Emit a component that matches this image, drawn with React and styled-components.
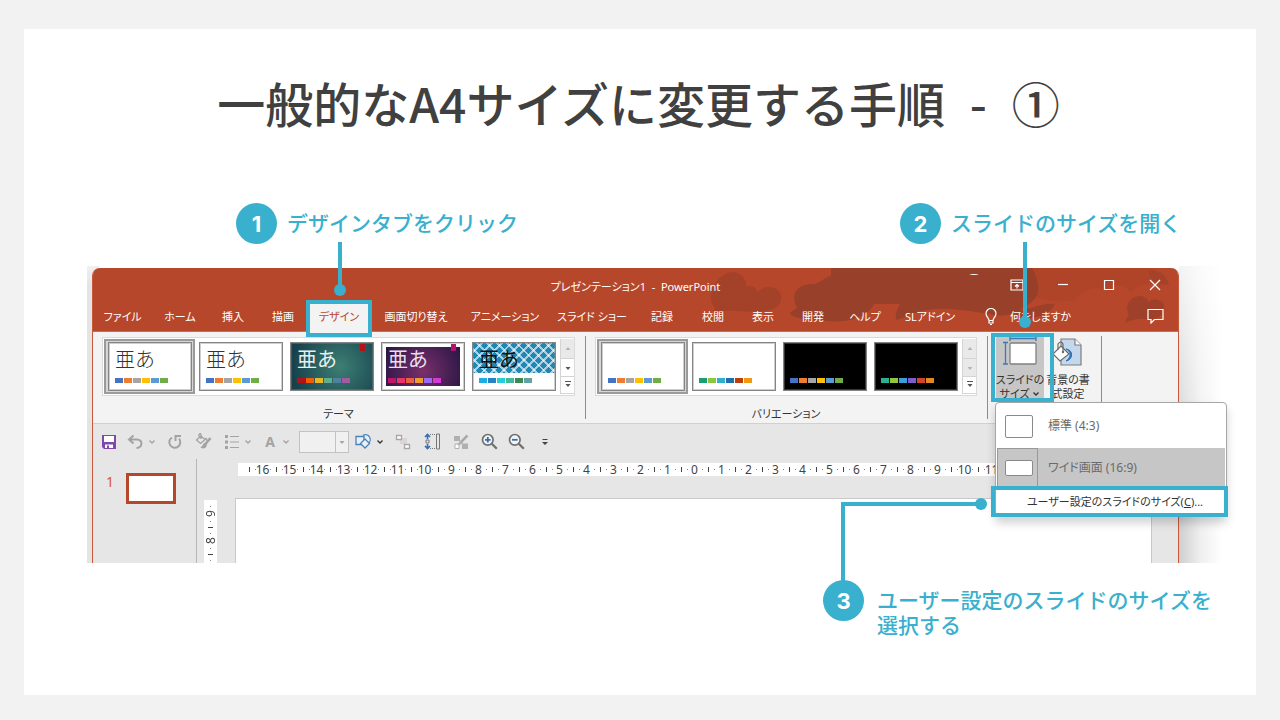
import React from "react";
import styled, { createGlobalStyle, css } from "styled-components";

const ACCENT = "#39b0cd";
const BRAND = "#b7472a";

const GlobalStyle = createGlobalStyle`
  *, *::before, *::after { box-sizing: border-box; }
  body { margin: 0; background: #f2f2f2; font-family: "Noto Sans", "Noto Sans CJK JP", sans-serif; }
  button, input { font: inherit; color: inherit; margin: 0; }
  button { border: 0; padding: 0; background: none; cursor: pointer; }
  svg { display: block; }
`;

/* ---------- slide ---------- */

const Page = styled.main`
  min-height: 100vh;
  padding: 29px 24px 25px;
  display: flex;
  flex-direction: column;
`;

const Slide = styled.article`
  flex: 1;
  background: #fff;
  padding: 43px 77px 52px 68px;
`;

const Title = styled.h1`
  margin: 0 0 71px;
  text-align: center;
  white-space: nowrap;
  font: 500 48px/60px "Noto Sans CJK JP", sans-serif;
  color: #404040;
  padding-left: 6px;
`;

const Dash = styled.span`
  margin: 0 14px;
`;

const StepRow = styled.div`
  display: grid;
  grid-template-columns: 664px auto;
  padding-left: 144px;
  margin-bottom: 24px;
`;

const LastStep = styled.div`
  padding: 17px 0 0 731px;
`;

const Step = styled.section`
  position: relative;
  display: flex;
  gap: ${(p) => (p.$wide ? 13 : 10)}px;
`;

const StepNumber = styled.span`
  flex: none;
  width: 41px;
  height: 41px;
  border-radius: 50%;
  background: ${ACCENT};
  color: #fff;
  font: 700 22px/42px Inter, sans-serif;
  text-align: center;
`;

const StepText = styled.p`
  margin: 7px 0 0;
  font: 500 21px/25px "Noto Sans CJK JP", sans-serif;
  color: ${ACCENT};
  white-space: nowrap;
`;

const Highlight = styled.span`
  position: absolute;
  inset: ${(p) => p.$inset};
  border: 4px solid ${ACCENT};
  z-index: 5;
  pointer-events: none;
`;

const Pin = styled.span`
  position: absolute;
  left: 28px;
  bottom: ${(p) => p.$bottom}px;
  width: 4px;
  height: ${(p) => p.$length}px;
  background: ${ACCENT};
  &::after {
    content: "";
    position: absolute;
    left: -4px;
    bottom: -6px;
    width: 12px;
    height: 12px;
    border-radius: 50%;
    background: ${ACCENT};
  }
`;

const Elbow = styled.span`
  position: absolute;
  left: 18px;
  bottom: 100%;
  width: 140px;
  height: 79px;
  margin-bottom: -1px;
  border: solid ${ACCENT};
  border-width: 4px 0 0 4px;
  z-index: 6;
  &::after {
    content: "";
    position: absolute;
    right: -6px;
    top: -8px;
    width: 12px;
    height: 12px;
    border-radius: 50%;
    background: ${ACCENT};
  }
`;

/* ---------- application window ---------- */

const Window = styled.section`
  position: relative;
  border-left: 1px solid #c8583c;
  border-right: 1px solid #c8583c;
  border-top-left-radius: 8px;
  border-top-right-radius: 8px;
  background: #e6e6e6;
  font-size: 11px;
  line-height: 16px;
  color: #333;
  &::before {
    content: "";
    position: absolute;
    inset: -2px auto 0 -6px;
    width: 12px;
    z-index: -1;
    background: linear-gradient(#f0f0f0, #e4e4e4 20px);
  }
  &::after {
    content: "";
    position: absolute;
    inset: -2px -44px 0 auto;
    width: 43px;
    background: linear-gradient(to right, #cfcfcf, #efefef 50%, #fff);
    mask-image: linear-gradient(rgba(0, 0, 0, 0.25), #000 75%);
  }
`;

const Stack = styled.div`
  position: relative;
  z-index: 0;
`;

const Header = styled.header`
  position: relative;
  background: ${BRAND};
  color: #fff;
  border-radius: 7px 7px 0 0;
  border-bottom: 1px solid #cf6a4e;
  height: 64px;
`;

const ArtClip = styled.div`
  position: absolute;
  inset: 0;
  overflow: hidden;
  border-radius: 7px 7px 0 0;
  display: flex;
  justify-content: flex-end;
`;

const TitleBar = styled.div`
  position: relative;
  display: grid;
  grid-template-columns: 1fr auto 1fr;
  align-items: center;
  height: 33px;
`;

const DocTitle = styled.span`
  grid-column: 2;
  padding-top: 5px;
  font-feature-settings: "palt";
  white-space: pre;
`;

const WindowControls = styled.div`
  display: flex;
  justify-content: flex-end;
`;

const WindowButton = styled.button`
  width: 46px;
  height: 31px;
  display: grid;
  place-items: center;
`;

const TabBar = styled.nav`
  position: relative;
  display: flex;
  height: 31px;
`;

const Tab = styled.button`
  position: relative;
  width: ${(p) => p.$w}px;
  height: 31px;
  white-space: nowrap;
  font-feature-settings: "palt";
  ${(p) =>
    p.$active &&
    css`
      background: #f3f3f3;
      color: ${BRAND};
    `}
`;

const TellMe = styled.button`
  display: flex;
  align-items: center;
  gap: 13px;
  margin-left: 17px;
  white-space: nowrap;
  font-feature-settings: "palt";
`;

const CommentButton = styled.button`
  margin-left: auto;
  padding: 0 14px 2px;
`;

/* ---------- ribbon ---------- */

const Ribbon = styled.div`
  display: flex;
  align-items: flex-start;
  height: 91px;
  padding: 4px 9px 0;
  background: #f3f3f3;
`;

const Group = styled.div`
  display: flex;
  flex-direction: column;
  align-items: center;
  gap: 10px;
  padding-top: 1px;
`;

const GroupLabel = styled.span`
  line-height: 16px;
  font-feature-settings: "palt";
`;

const Divider = styled.span`
  width: 1px;
  height: 83px;
  background: #8c8c8c;
  margin: ${(p) => p.$margin};
`;

const Gallery = styled.div`
  display: flex;
  padding: 1px;
  background: #fff;
  border: 1px solid #dadada;
`;

const GalleryItem = styled.button`
  width: 91px;
  height: 55px;
  padding: 1px 1px 1px 2px;
  border: 2px solid ${(p) => (p.$selected ? "#9a9a9a" : "transparent")};
  background: ${(p) => (p.$selected ? "#d6d6d2" : "transparent")};
`;

const Thumb = styled.span`
  position: relative;
  display: flex;
  flex-direction: column;
  justify-content: space-between;
  width: 84px;
  height: 49px;
  border: 1px solid #848484;
  outline: 1px solid #84848466;
  outline-offset: -2px;
  padding: 2px 0 7px 6px;
  background: ${(p) => p.$bg};
  ${(p) =>
    p.$frame &&
    css`
      box-shadow: inset 0 0 0 ${p.$frame}px #fff;
    `}
`;

const Ribbonlet = styled.span`
  position: absolute;
  right: 8px;
  top: 1px;
  width: 5px;
  height: 7px;
  background: ${(p) => p.$color};
`;

const Sample = styled.span`
  height: 26px;
  font: ${(p) => p.$weight} 20px/28px "Noto Sans CJK JP", sans-serif;
  text-align: left;
  color: ${(p) => p.$color};
`;

const Swatches = styled.span`
  display: flex;
  gap: 1px;
  margin-top: auto;
`;

const Swatch = styled.i`
  width: 8px;
  height: 5px;
  background: ${(p) => p.$color};
`;

const Scroller = styled.div`
  display: grid;
  grid-template-rows: 20px 18px 17px;
  width: 14px;
  margin: 0 -1px 0 1px;
  border-left: 1px solid #d4d4d4;
`;

const ScrollButton = styled.button`
  display: grid;
  place-items: center;
  border-bottom: 1px solid #d4d4d4;
  color: ${(p) => (p.$off ? "#b4b4b4" : "#555")};
  background: ${(p) => (p.$off ? "#e9e9e9" : "#fff")};
`;

const SizeWrap = styled.div`
  position: relative;
  z-index: 3;
`;

const BigButton = styled.button`
  display: flex;
  flex-direction: column;
  align-items: center;
  width: 48px;
  height: 66px;
  line-height: 14px;
  white-space: nowrap;
  font-feature-settings: "palt";
  background: ${(p) => (p.$pressed ? "#c6c6c6" : "transparent")};
  svg { margin-bottom: 3px; }
`;

const Inline = styled.span`
  display: flex;
  align-items: center;
  gap: 3px;
  svg { margin: 0; }
`;

const Menu = styled.div`
  position: absolute;
  left: -1px;
  top: 66px;
  width: 232px;
  padding: 1px;
  background: #fff;
  border: 1px solid #a6a6a6;
  border-radius: 4px;
  box-shadow: 0 6px 10px rgba(0, 0, 0, 0.18);
`;

const MenuItem = styled.button`
  display: grid;
  grid-template-columns: 41px 1fr;
  align-items: center;
  gap: 10px;
  width: 100%;
  height: ${(p) => (p.$selected ? 40 : 44)}px;
  text-align: left;
  font-size: 12px;
  color: #6a6a6a;
  background: ${(p) => (p.$selected ? "#c6c6c6" : "#fff")};
  font-feature-settings: "palt";
`;

const RatioCell = styled.span`
  display: grid;
  place-items: center;
  align-self: stretch;
  padding-left: 3px;
  border: solid #999;
  border-width: ${(p) => (p.$selected ? "1px" : 0)};
`;

const Ratio = styled.span`
  width: 28px;
  height: ${(p) => p.$h}px;
  border: 1px solid #8a8a8a;
  border-radius: 2px;
  background: #fff;
`;

const CustomSize = styled.button`
  position: relative;
  display: block;
  width: 100%;
  height: 26px;
  margin-top: 1px;
  padding-left: 8px;
  white-space: nowrap;
  font-feature-settings: "palt";
`;

/* ---------- quick access toolbar ---------- */

const QuickBar = styled.div`
  display: flex;
  align-items: center;
  height: 36px;
  padding-left: 4px;
  border-top: 1px solid #d0d0d0;
  color: #a3a3a3;
`;

const Tool = styled.button`
  display: flex;
  align-items: center;
  justify-content: ${(p) => (p.$menu ? "flex-start" : "center")};
  gap: 4px;
  width: ${(p) => p.$w}px;
  height: 24px;
  padding-left: ${(p) => (p.$menu ? 6 : 0)}px;
`;

const FontSize = styled.label`
  display: flex;
  width: 50px;
  height: 22px;
  margin: 0 0 0 5px;
  border: 1px solid #c2c2c2;
  background: #f0f0f0;
  input {
    width: 36px;
    border: 0;
    border-right: 1px solid #c2c2c2;
    padding: 0 2px;
    background: none;
    outline: 0;
  }
  svg { margin: auto; }
`;

/* ---------- workspace ---------- */

const Workspace = styled.div`
  display: grid;
  grid-template-columns: 104px 1fr;
  height: 104px;
  font-size: 12px;
`;

const Outline = styled.aside`
  display: flex;
  gap: 12px;
  padding: 14px 0 0 13px;
  border-right: 1px solid #b5b5b5;
  font-size: 14px;
  line-height: 18px;
  color: #d4553a;
`;

const PageThumb = styled.span`
  width: 50px;
  height: 31px;
  background: #fff;
  border: 3px solid ${BRAND};
`;

const Editor = styled.div`
  display: grid;
  grid-template: 39px 1fr / 38px 1fr 26px;
`;

const Ruler = styled.div`
  grid-column: 2;
  display: flex;
  height: 13px;
  margin: 4px 0 0 3px;
  padding-left: 11px;
  background: #fff;
  line-height: 13px;
  color: #444;
`;

const SideRuler = styled.div`
  grid-column: 1;
  grid-row: 2;
  display: flex;
  width: 13px;
  margin: 2px 0 0 7px;
  background: #fff;
  writing-mode: vertical-rl;
  line-height: 13px;
  color: #444;
`;

const Unit = styled.span`
  position: relative;
  flex: none;
  display: flex;
  align-items: center;
  justify-content: center;
  inline-size: ${(p) => (p.$short ? 8 : 27)}px;
  block-size: 13px;
  b { font-weight: 400; ${(p) => p.$side && "transform: rotate(180deg);"} }
  &::before, &::after {
    content: "";
    position: absolute;
    inset-inline-start: 0;
    inset-block-start: 4px;
    inline-size: 1px;
    block-size: 5px;
    background: #444;
  }
  &::after {
    inset-inline-start: 6px;
    inset-block-start: 6px;
    block-size: 1px;
    background: #888;
    box-shadow: ${(p) => (p.$short ? "none" : p.$side ? "0 15px #888" : "15px 0 #888")};
  }
  ${(p) => p.$side && "&:first-child::before { display: none; }"}
`;

const Canvas = styled.div`
  grid-column: 2;
  background: #fff;
  border: solid #c9c9c9;
  border-width: 1px 1px 0;
`;

/* ---------- drawings ---------- */

const Chevron = ({ color = "currentColor" }) => (
  <svg width="8" height="6" viewBox="0 0 8 6" fill="none" stroke={color} strokeWidth="1.3">
    <path d="M1.500 1.500 4 4l2.500-2.500" />
  </svg>
);

const Arrow = ({ up, bar }) => (
  <svg width="8" height="8" viewBox="0 0 8 8" fill="currentColor">
    {bar && <path d="M1 0h6v1H1z" />}
    <path d={up ? "M4 2 1.500 5h5z" : "M1.500 3h5L4 6z"} />
  </svg>
);

const HeaderArt = () => (
  <svg width="480" height="64" viewBox="0 0 480 64" aria-hidden="true">
    <g fill="#98402a">
      <path opacity=".6" d="M17 40C6 28 18 6 34 4c10 0 15 8 14 15 6-3 10 1 12 5 5-7 20-7 23 3 2 10-6 14-11 15-18 5-40-3-57 3 0-3 2-3 2-5z" />
      <path d="M99 40c-8-16 2-25 18-24 6-2 10-7 16-8V0h201c8 14 11 30-7 38-12 10-20 11-36 8-30-5-50-8-72-2-6 2-13 6-21 8-1-7 1-10 4-16h-26c-8 16-34 20-54 16-14-1-28-1-30-7l7-5z" />
      <path opacity=".85" d="M312 42c18 2 30-8 45-6-4 10-20 16-36 14z" />
      <path opacity=".8" d="M428 51c4-3 2-6 1-10 0-13 16-18 22-7 5-5 15-2 15 5 2 12-14 13-20 12-7-1-14 2-19 4z" />
    </g>
    <g fill="#98402a" opacity=".55">
      <path d="M330 0h120c8 0 14 6 20 16l-10 3c-9-8-20 1-28 5-8-10-16-8-19 0-12-7-28-4-36 8-18 3-35 0-47-6z" opacity=".45" />
      <path d="M450 3c8-3 19 3 21 14-8-2-14 0-18-6z" />
    </g>
    <path d="M271 7q5-2 10 0z" fill="#fff" />
  </svg>
);

const stroke = { fill: "none", stroke: "currentColor", strokeWidth: 1.2 };

const controls = [
  ["リボンの表示オプション", <svg key="r" width="14" height="12" viewBox="0 0 14 12" {...stroke}><path d="M1 1h12v10H1zM1 3.500h12M7 9.500V5.500M5 7.500l2-2 2 2" /></svg>],
  ["最小化", <svg key="m" width="12" height="12" viewBox="0 0 12 12" {...stroke}><path d="M1 5.500h10" /></svg>],
  ["最大化", <svg key="x" width="12" height="12" viewBox="0 0 12 12" {...stroke}><path d="M1.500 1.500h9v9h-9z" /></svg>],
  ["閉じる", <svg key="c" width="12" height="12" viewBox="0 0 12 12" {...stroke}><path d="m1 1 10 10M11 1 1 11" /></svg>],
];

const SaveIcon = () => (
  <svg width="16" height="16" viewBox="0 0 16 16">
    <path d="M1 1h14v14H3l-2-2z" fill="#8048a8" />
    <path d="M3 2h10v6H3zM4 10.500h8V14H4z" fill="#fff" />
    <path d="M6 11.500h2V14H6z" fill="#8048a8" />
  </svg>
);

const UndoIcon = () => (
  <svg width="17" height="16" viewBox="0 0 17 16" fill="none" stroke="currentColor" strokeWidth="2">
    <path d="M6.500 1.500 2 5.500l4.500 4M2.500 5.500H10c6 0 6 8-.5 8.500" />
  </svg>
);

const RedoIcon = () => (
  <svg width="16" height="16" viewBox="0 0 16 16" fill="none" stroke="currentColor" strokeWidth="2">
    <path d="M5 3.500a5.500 5.500 0 1 0 7 1.200M8.500 7V2H14" />
  </svg>
);

const PainterIcon = () => (
  <svg width="17" height="17" viewBox="0 0 17 17" fill="none" stroke="currentColor" strokeWidth="1.3">
    <path d="m1.500 7 4.500-4 4 3.500-4.500 4zM4 5V1.500q1.500-1.500 2 0V6" />
    <path d="m15.500 5-5 6" strokeWidth="2.500" />
    <path d="M10.500 9.500c-3 0-2 4-5 4.500 1 2.500 6.500 2 6.500-3z" fill="currentColor" stroke="none" />
    <path d="M10 5.500q2.500 0 2 3.500" />
  </svg>
);

const BulletsIcon = () => (
  <svg width="16" height="16" viewBox="0 0 16 16" fill="currentColor">
    <path d="M1 1h3v3H1zM1 6.500h3v3H1zM1 12h3v3H1zM6 2h9v1H6zM6 7.500h9v1H6zM6 13h9v1H6z" />
  </svg>
);

const FontLetter = styled.span`
  width: 16px;
  font-weight: 700;
  font-size: 14px;
  line-height: 24px;
  text-align: center;
`;

const ShapesIcon = () => (
  <svg width="17" height="17" viewBox="0 0 17 17" fill="#e9f1f8" stroke="#4a82b8" strokeWidth="1.300">
    <path d="M8 2.500a4.500 4.500 0 1 1 5 8" />
    <path d="M1 3.500h8v8H1z" />
    <path d="m10 6 4.500 4.500L10 15l-4.500-4.500z" />
  </svg>
);

const AlignIcon = () => (
  <svg width="16" height="16" viewBox="0 0 16 16">
    <path d="M7 4h5v5h-1v1H5V6h2z" fill="#d8d4d8" />
    <path d="M1.500 1.500h5v4h-5zM9.500 10.500h5v4h-5z" fill="#fff" stroke="#aaa5aa" strokeWidth="1.300" />
  </svg>
);

const SpacingIcon = () => (
  <svg width="17" height="17" viewBox="0 0 17 17" fill="none">
    <path d="M3.500 6V1.500M1 4l2.500-2.500L6 4M3.500 11v4.500M1 13l2.500 2.500L6 13" stroke="#2f6fb5" strokeWidth="1.600" />
    <path d="M2 7h3v3H2zM12.500 1h3v15h-3z" stroke="#777" />
    <path d="M6 1.500h6M6 15.500h6" stroke="#777" strokeDasharray="1 1" />
  </svg>
);

const SelectIcon = () => (
  <svg width="16" height="16" viewBox="0 0 16 16" fill="#b0b0b0">
    <path d="M1 2h6v5H1zM9 9.500h6V15H9z" />
    <path d="M2 10h4v4.500H2z" fill="#fff" stroke="#b0b0b0" />
    <path d="M14.500 1.500 7 9" stroke="#aaa" strokeWidth="2.500" />
    <path d="M8 6.500c-2 1-2 3-4 4 2 1 5 0 6-2z" />
  </svg>
);

const ZoomIcon = ({ plus }) => (
  <svg width="17" height="17" viewBox="0 0 17 17" fill="none">
    <circle cx="6.800" cy="6.800" r="5.300" fill="#f4f4f4" stroke="#707070" strokeWidth="1.700" />
    <path d="m10.800 10.800 5 5" stroke="#707070" strokeWidth="2.300" />
    <path d={plus ? "M4 6.800h5.600M6.800 4v5.600" : "M4 6.800h5.600"} stroke="#2f6fb5" strokeWidth="1.800" />
  </svg>
);

const SlideSizeIcon = () => (
  <svg width="36" height="34" viewBox="0 0 36 34" fill="none">
    <path d="M8 2.500h26M8 0v5M34 0v5M3.500 6v22M1 6.500h5M1 28h5" stroke="#3f78b5" strokeWidth="1.300" />
    <rect x="8" y="7" width="26" height="21" rx="1" fill="#fff" stroke="#808080" strokeWidth="1.300" />
  </svg>
);

const BackgroundIcon = () => (
  <svg width="32" height="34" viewBox="0 0 32 34" fill="none">
    <path d="M9 3h14l6 6v20H9z" fill="#c3d7ed" stroke="#7f7f7f" strokeWidth="1.200" />
    <path d="M23 3v6h6" fill="#fff" stroke="#7f7f7f" strokeWidth="1.200" />
    <path d="M14 13c5 2 6 8 0 12 7-1 8-11 0-12z" fill="#2e74b8" stroke="#2e74b8" />
    <path d="m9 10 8 8-9 7-7-7z" fill="#fff" stroke="#6a6a6a" strokeWidth="1.200" />
    <path d="M6 14V8q3-4 5 0v8" stroke="#6a6a6a" strokeWidth="1.200" />
    <circle cx="11" cy="16" r="1.200" fill="#6a6a6a" />
  </svg>
);

/* ---------- data ---------- */

const tabs = [
  ["ファイル", 59], ["ホーム", 56], ["挿入", 50], ["描画", 50], ["デザイン", 62],
  ["画面切り替え", 92], ["アニメーション", 86], ["スライド ショー", 88], ["記録", 52], ["校閲", 50],
  ["表示", 50], ["開発", 50], ["ヘルプ", 54], ["SLアドイン", 76],
];

const office = ["#4472c4", "#ed7d31", "#a5a5a5", "#ffc000", "#5b9bd5", "#70ad47"];

const pattern =
  "repeating-linear-gradient(45deg, #ffffff99 0 2px, transparent 2px 7px), repeating-linear-gradient(-45deg, #ffffff99 0 2px, transparent 2px 7px), #1f87b4";

const themes = [
  { bg: "#fff", ink: "#333", weight: 300, colors: office, selected: true },
  { bg: "#fff", ink: "#333", weight: 300, colors: office },
  {
    bg: "radial-gradient(circle at 60% 50%, #3d7f74, #16404c 90%)", ink: "#e8f0ee", weight: 400, flag: "#b31217",
    colors: ["#b31217", "#f25c05", "#e9b724", "#5fae92", "#4f81a0", "#a35ba0"],
  },
  {
    bg: "radial-gradient(circle at 50% 60%, #7a2f6a, #2a1746 85%)", ink: "#e8dfee", weight: 400, flag: "#b5126b", frame: 4,
    colors: ["#c2146b", "#e8336d", "#e8603c", "#f09a35", "#9a6af5", "#d63ad6"],
  },
  {
    bg: `linear-gradient(#fff, #fff) 0 30px / 100% 20px no-repeat, ${pattern}`, ink: "#111", weight: 400,
    colors: ["#1cade4", "#2683c6", "#27ced7", "#42ba97", "#3e8853", "#62a39f"],
  },
];

const variants = [
  { bg: "#fff", colors: office, selected: true },
  { bg: "#fff", colors: ["#1a9e78", "#8cc63e", "#31b0cd", "#1f6fad", "#b8400e", "#f0980e"] },
  { bg: "#000", colors: office },
  { bg: "#000", colors: ["#2ab08e", "#8fc743", "#3a9fd8", "#7f5ccc", "#d1442b", "#e08a26"] },
];

const rulerUnits = Array.from({ length: 28 }, (_, i) => Math.abs(16 - i));

/* ---------- sections ---------- */

const ThemeGallery = ({ label, items, offDown }) => (
  <Group>
    <Gallery>
      {items.map((t, i) => (
        <GalleryItem key={i} $selected={t.selected} aria-label={`${label} ${i + 1}`}>
          <Thumb $bg={t.bg} $frame={t.frame}>
            {t.flag && <Ribbonlet $color={t.flag} />}
            {t.ink && <Sample $color={t.ink} $weight={t.weight}>亜あ</Sample>}
            <Swatches>
              {t.colors.map((c) => <Swatch key={c} $color={c} />)}
            </Swatches>
          </Thumb>
        </GalleryItem>
      ))}
      <Scroller>
        <ScrollButton $off aria-label="上へ"><Arrow up /></ScrollButton>
        <ScrollButton $off={offDown} aria-label="下へ"><Arrow /></ScrollButton>
        <ScrollButton aria-label="その他"><Arrow bar /></ScrollButton>
      </Scroller>
    </Gallery>
    <GroupLabel>{label}</GroupLabel>
  </Group>
);

const AppHeader = () => (
  <Header>
    <ArtClip><HeaderArt /></ArtClip>
    <TitleBar>
      <DocTitle>プレゼンテーション1  -  PowerPoint</DocTitle>
      <WindowControls>
        {controls.map(([name, icon]) => (
          <WindowButton key={name} aria-label={name}>{icon}</WindowButton>
        ))}
      </WindowControls>
    </TitleBar>
    <TabBar>
      {tabs.map(([name, w]) => (
        <Tab key={name} $w={w} $active={name === "デザイン"}>
          {name}
          {name === "デザイン" && (
            <Highlight $inset="-1px -2px -5px -2px"><Pin $bottom={43} $length={48} /></Highlight>
          )}
        </Tab>
      ))}
      <TellMe>
        <svg width="12" height="17" viewBox="0 0 12 17" {...stroke}>
          <path d="M4 12.500C4 10 1 9 1 5.500a5 5 0 0 1 10 0C11 9 8 10 8 12.500zM4 12.500V15h4v-2.500M5 16.500h2" />
        </svg>
        何をしますか
      </TellMe>
      <CommentButton aria-label="コメント">
        <svg width="17" height="16" viewBox="0 0 17 16" {...stroke}>
          <path d="M1 1.500h15v10H7.500L4 15v-3.500H1z" />
        </svg>
      </CommentButton>
    </TabBar>
  </Header>
);

const SizeMenu = () => (
  <Menu role="menu">
    <MenuItem role="menuitem">
      <RatioCell><Ratio $h={23} /></RatioCell>
      標準 (4:3)
    </MenuItem>
    <MenuItem role="menuitem" $selected>
      <RatioCell $selected><Ratio $h={16} /></RatioCell>
      ワイド画面 (16:9)
    </MenuItem>
    <CustomSize role="menuitem">
      ユーザー設定のスライドのサイズ(<u>C</u>)...
      <Highlight $inset="-3px -3px -2px -6px" />
    </CustomSize>
  </Menu>
);

const AppRibbon = () => (
  <Ribbon>
    <ThemeGallery label="テーマ" items={themes} />
    <Divider $margin="0 9px 0 10px" />
    <ThemeGallery label="バリエーション" items={variants} offDown />
    <Divider $margin="0 8px 0 10px" />
    <SizeWrap>
      <BigButton $pressed aria-haspopup="menu">
        <SlideSizeIcon />
        スライドの
        <Inline>サイズ <Chevron /></Inline>
      </BigButton>
      <SizeMenu />
      <Highlight $inset="-3px -10px 0 -5px"><Pin $bottom={76} $length={80} /></Highlight>
    </SizeWrap>
    <BigButton>
      <BackgroundIcon />
      <span>背景の書</span>
      <span>式設定</span>
    </BigButton>
    <Divider $margin="0 0 0 9px" />
  </Ribbon>
);

const QuickAccess = () => (
  <QuickBar>
    <Tool $w={24} aria-label="上書き保存"><SaveIcon /></Tool>
    <Tool $w={40} $menu aria-label="元に戻す"><UndoIcon /><Chevron /></Tool>
    <Tool $w={28} aria-label="やり直し"><RedoIcon /></Tool>
    <Tool $w={29} aria-label="書式のコピー"><PainterIcon /></Tool>
    <Tool $w={38} $menu aria-label="箇条書き"><BulletsIcon /><Chevron /></Tool>
    <Tool $w={38} $menu aria-label="フォント"><FontLetter>A</FontLetter><Chevron /></Tool>
    <FontSize>
      <input type="text" aria-label="フォント サイズ" />
      <Arrow />
    </FontSize>
    <Tool $w={38} $menu aria-label="図形"><ShapesIcon /><Chevron color="#333" /></Tool>
    <Tool $w={31} aria-label="配置"><AlignIcon /></Tool>
    <Tool $w={28} aria-label="間隔"><SpacingIcon /></Tool>
    <Tool $w={29} aria-label="選択"><SelectIcon /></Tool>
    <Tool $w={28} aria-label="拡大"><ZoomIcon plus /></Tool>
    <Tool $w={27} aria-label="縮小"><ZoomIcon /></Tool>
    <Tool $w={30} aria-label="カスタマイズ">
      <svg width="8" height="8" viewBox="0 0 8 8" fill="#444"><path d="M1.500 1h5v1h-5zM1 4h6L4 7z" /></svg>
    </Tool>
  </QuickBar>
);

const EditorPane = () => (
  <Workspace>
    <Outline>
      1
      <PageThumb />
    </Outline>
    <Editor>
      <Ruler>
        {rulerUnits.map((n, i) => <Unit key={i}><b>{n}</b></Unit>)}
      </Ruler>
      <SideRuler>
        {[9, 8].map((n) => <Unit key={n} $side><b>{n}</b></Unit>)}
        <Unit $side $short />
      </SideRuler>
      <Canvas />
    </Editor>
  </Workspace>
);

export default function App() {
  return (
    <Page>
      <GlobalStyle />
      <Slide>
        <Title>一般的なA4サイズに変更する手順 <Dash>-</Dash> ①</Title>
        <StepRow>
          <Step>
            <StepNumber>1</StepNumber>
            <StepText>デザインタブをクリック</StepText>
          </Step>
          <Step>
            <StepNumber>2</StepNumber>
            <StepText>スライドのサイズを開く</StepText>
          </Step>
        </StepRow>
        <Stack>
          <Window>
            <AppHeader />
            <AppRibbon />
            <QuickAccess />
            <EditorPane />
          </Window>
        </Stack>
        <LastStep>
          <Step $wide>
            <Elbow />
            <StepNumber>3</StepNumber>
            <StepText>
              ユーザー設定のスライドのサイズを
              <br />
              選択する
            </StepText>
          </Step>
        </LastStep>
      </Slide>
    </Page>
  );
}
